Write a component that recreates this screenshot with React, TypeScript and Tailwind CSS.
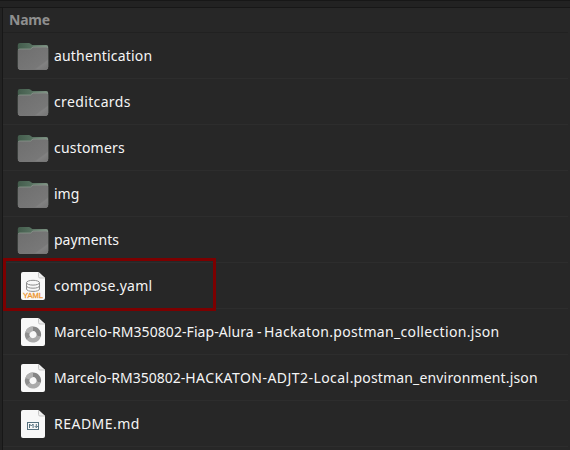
import React from 'react';

function FolderIcon() {
  return (
    <svg width="32" height="28" viewBox="0 0 32 28" className="block">
      <defs>
        <linearGradient id="tab" x1="0" y1="0" x2="1" y2="0">
          <stop offset="0" stopColor="#435c4c" />
          <stop offset=".45" stopColor="#56705f" />
          <stop offset="1" stopColor="#7d9283" />
        </linearGradient>
        <linearGradient id="front" x1="0" y1="0" x2="1" y2="1">
          <stop offset="0" stopColor="#6e6e6e" />
          <stop offset=".76" stopColor="#787878" />
          <stop offset=".8" stopColor="#818181" />
          <stop offset="1" stopColor="#757575" />
        </linearGradient>
      </defs>
      <path d="M.8 25V3Q.8 1 2.800 1h9q1 0 1.800.8L15.200 3H29.200q2 0 2 2v20z" fill="url(#tab)" />
      <path d="M.8 8.500Q.8 7 2.800 7h10.700L16 5H29.200q2 0 2 2v18.500q0 2-2 2H2.800q-2 0-2-2z" fill="url(#front)" />
      <path d="M1.300 7.600Q2 7 2.800 7h10.700L16 5H29.200q1.300 0 1.700 1" fill="none" stroke="#8b978e" strokeWidth=".8" />
      <path d="M1.300 26.500q.5 1 1.500 1h26.400q1 0 1.500-1" fill="none" stroke="#929292" strokeWidth=".6" />
    </svg>
  );
}

function FileIcon({ kind }: { kind: string }) {
  return (
    <svg width="24" height="28" viewBox="0 0 24 28" className="block">
      <path d="M2 0h15.500L24 6V26q0 2-2 2H2q-2 0-2-2V2Q0 0 2 0z" fill="#f8f8f8" />
      <path d="M17.500 0V4.500Q17.500 6 19 6h5" fill="#eeeeee" stroke="#bdbdbd" strokeWidth=".8" />
      {kind === 'yaml' && (
        <>
          <g fill="none" stroke="#8e8e8e" strokeWidth="1">
            <ellipse cx="12" cy="10.700" rx="6.500" ry="2.400" />
            <path d="M5.500 10.700v6.300c0 3.200 13 3.200 13 0v-6.300M5.500 13.800c0 3.200 13 3.200 13 0" />
          </g>
          <text x="12" y="26.300" textAnchor="middle" textLength="20" lengthAdjust="spacingAndGlyphs" fontFamily="'Liberation Sans', sans-serif" fontSize="7.600" fill="#ee962f" stroke="#ee962f" strokeWidth=".3">YAML</text>
        </>
      )}
      {kind === 'json' && (
        <g fill="none" strokeWidth="4.400">
          <path d="M12 10.800a5.800 5.800 0 0 0-4.500 9.500" stroke="#8e8e8e" />
          <path d="M7.300 20a5.800 5.800 0 0 0 10.300-2" stroke="#aaaaaa" />
          <path d="M17.700 18.100A5.800 5.800 0 0 0 12 10.800" stroke="#858585" />
          <path d="M12 10.800a5.800 5.800 0 0 0-5.500 4" stroke="#b0b0b0" />
        </g>
      )}
      {kind === 'md' && (
        <g fill="none" stroke="#56717e" strokeWidth="1">
          <rect x="6.500" y="12.500" width="11" height="7" />
          <path d="M8.500 18v-4l1.800 2 1.800-2v4M15.300 14v3.500M13.700 16l1.600 1.700 1.600-1.700" />
        </g>
      )}
    </svg>
  );
}

type Entry = { name: string; kind: string; label: React.ReactNode };

const entries: Entry[] = [
  { name: 'authentication', kind: 'folder', label: <span className="tracking-[0.18px]">authentication</span> },
  { name: 'creditcards', kind: 'folder', label: <span className="tracking-[0.36px]">creditcards</span> },
  { name: 'customers', kind: 'folder', label: <span className="tracking-[0.2px]">customers</span> },
  { name: 'img', kind: 'folder', label: 'img' },
  { name: 'payments', kind: 'folder', label: 'payments' },
  { name: 'compose.yaml', kind: 'yaml', label: <span className="tracking-[0.25px]">compose.yaml</span> },
  {
    name: 'collection',
    kind: 'json',
    label: (
      <>
        <span className="tracking-[0.08px]">Marcelo-RM350802-Fiap-Alura</span>
        <span className="tracking-[-0.5px]"> - </span>
        <span className="tracking-[0.33px]">Hackaton.postman_collection.json</span>
      </>
    ),
  },
  {
    name: 'environment',
    kind: 'json',
    label: (
      <>
        Marcelo-RM350802-
        <span className="tracking-[0.45px]">HACKATON-ADJT2-Local</span>
        <span className="tracking-[0.16px]">.postman_environment.json</span>
      </>
    ),
  },
  { name: 'README.md', kind: 'md', label: <span className="tracking-[0.48px]">README.md</span> },
];

export default function App() {
  return (
    <div className="flex h-[450px] w-[570px] flex-col overflow-hidden bg-[#222222] font-['Noto_Sans',sans-serif]">
      <div className="h-2 shrink-0 border-t border-b border-[#171717] bg-[#222222]" />
      <div className="ml-[2px] flex grow flex-col border-l border-[#171717] bg-[#272727]">
        <div className="mr-[2px] flex h-[25px] shrink-0 items-center border-b border-[#212121] pl-[6px] text-[14px] leading-5 font-bold tracking-[-0.2px] text-[#8f8f8f]">Name</div>
        <ul className="mr-[2px]">
          {entries.map((e) => (
            <li key={e.name} className="relative flex h-[46px] items-center border-b border-[#2d2d2d] pl-[14px]">
              {e.kind === 'yaml' && (
                <div className="absolute -top-[5px] left-0 h-[53px] w-[213px] border-[3px] border-[#7c0000]" />
              )}
              <div className="flex w-8 shrink-0 justify-center pt-px">
                {e.kind === 'folder' ? <FolderIcon /> : <FileIcon kind={e.kind} />}
              </div>
              <span className="ml-[5px] text-[14px] leading-5 whitespace-pre text-[#f5f5f5]">{e.label}</span>
            </li>
          ))}
        </ul>
      </div>
    </div>
  );
}
